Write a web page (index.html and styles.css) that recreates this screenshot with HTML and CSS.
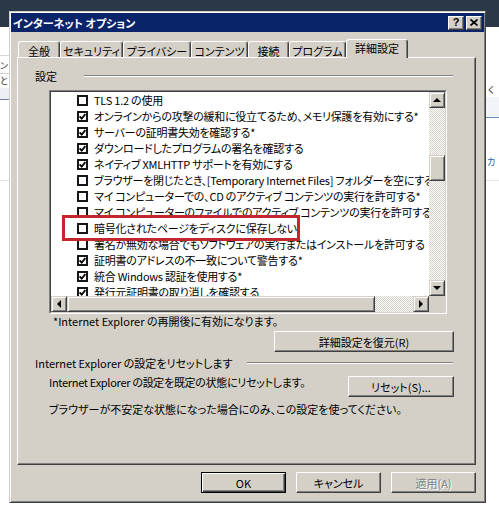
FILE: index.html
```html
<!DOCTYPE html>
<html lang="ja">
<head>
<meta charset="utf-8">
<title>インターネット オプション</title>
<link rel="stylesheet" href="styles.css">
</head>
<body>
<div class="desktop">
  <div class="taskband"></div>
  <div class="bg-rule l1"></div>
  <span class="bg-frag f-n">ン</span>
  <div class="bg-rule l2"></div>
  <span class="bg-frag f-to">と</span>
  <div class="bg-band lb"></div>
  <div class="bg-rule l3"></div>
  <div class="bg-rule l4"></div>
  <span class="bg-frag f-ku">く</span>
  <div class="bg-band rb"></div>
  <div class="bg-rule r1"></div>
  <span class="bg-frag f-ka">カ</span>
  <div class="bg-rule r2"></div>
</div>

<div class="dialog">
  <div class="titlebar">
    <span class="title">インターネット オプション</span>
    <div class="capbtns">
      <span class="capbtn help">?</span>
      <span class="capbtn close"><svg width="8" height="7" viewBox="0 0 8 7"><path d="M0.5 0.5 L7.5 6.5 M7.5 0.5 L0.5 6.5" stroke="#000" stroke-width="1.7" fill="none"/></svg></span>
    </div>
  </div>
  <div class="client">
    <div class="tabs">
      <div class="tab t1">全般</div>
      <div class="tab t2">セキュリティ</div>
      <div class="tab t3">プライバシー</div>
      <div class="tab t4">コンテンツ</div>
      <div class="tab t5">接続</div>
      <div class="tab t6">プログラム</div>
      <div class="tab active">詳細設定</div>
    </div>
    <div class="panel">
      <div class="group-head"><span>設定</span><i class="etch etch-settings"></i></div>
      <div class="listbox">
        <div class="listbox-inner">
          <div class="list-view">
            <div class="row"><span class="cb"></span><span>TLS 1.2 の使用</span></div>
            <div class="row"><span class="cb on"><svg width="7" height="7" viewBox="0 0 7 7"><path d="M0.6 3.4 L2.7 5.6 L6.4 1.1" stroke="#000" stroke-width="1.7" fill="none"/></svg></span><span>オンラインからの攻撃の緩和に役立てるため、メモリ保護を有効にする*</span></div>
            <div class="row"><span class="cb on"><svg width="7" height="7" viewBox="0 0 7 7"><path d="M0.6 3.4 L2.7 5.6 L6.4 1.1" stroke="#000" stroke-width="1.7" fill="none"/></svg></span><span>サーバーの証明書失効を確認する*</span></div>
            <div class="row"><span class="cb on"><svg width="7" height="7" viewBox="0 0 7 7"><path d="M0.6 3.4 L2.7 5.6 L6.4 1.1" stroke="#000" stroke-width="1.7" fill="none"/></svg></span><span>ダウンロードしたプログラムの署名を確認する</span></div>
            <div class="row"><span class="cb on"><svg width="7" height="7" viewBox="0 0 7 7"><path d="M0.6 3.4 L2.7 5.6 L6.4 1.1" stroke="#000" stroke-width="1.7" fill="none"/></svg></span><span>ネイティブ XMLHTTP サポートを有効にする</span></div>
            <div class="row"><span class="cb"></span><span>ブラウザーを閉じたとき、[Temporary Internet Files] フォルダーを空にする</span></div>
            <div class="row"><span class="cb"></span><span>マイ コンピューターでの、CD のアクティブ コンテンツの実行を許可する*</span></div>
            <div class="row"><span class="cb"></span><span>マイ コンピューターのファイルでのアクティブ コンテンツの実行を許可する*</span></div>
            <div class="row"><span class="cb"></span><span>暗号化されたページをディスクに保存しない</span></div>
            <div class="row"><span class="cb"></span><span>署名が無効な場合でもソフトウェアの実行またはインストールを許可する</span></div>
            <div class="row"><span class="cb on"><svg width="7" height="7" viewBox="0 0 7 7"><path d="M0.6 3.4 L2.7 5.6 L6.4 1.1" stroke="#000" stroke-width="1.7" fill="none"/></svg></span><span>証明書のアドレスの不一致について警告する*</span></div>
            <div class="row"><span class="cb on"><svg width="7" height="7" viewBox="0 0 7 7"><path d="M0.6 3.4 L2.7 5.6 L6.4 1.1" stroke="#000" stroke-width="1.7" fill="none"/></svg></span><span>統合 Windows 認証を使用する*</span></div>
            <div class="row"><span class="cb on"><svg width="7" height="7" viewBox="0 0 7 7"><path d="M0.6 3.4 L2.7 5.6 L6.4 1.1" stroke="#000" stroke-width="1.7" fill="none"/></svg></span><span>発行元証明書の取り消しを確認する</span></div>
          </div>
          <div class="vscroll">
            <span class="sbtn"><i class="arr up"></i></span>
            <div class="track vtrack"><span class="thumb vthumb"></span></div>
            <span class="sbtn"><i class="arr down"></i></span>
          </div>
          <div class="hscroll">
            <span class="sbtn"><i class="arr left"></i></span>
            <span class="thumb hthumb"></span>
            <div class="track htrack"></div>
            <span class="sbtn"><i class="arr right"></i></span>
          </div>
          <div class="corner"></div>
        </div>
      </div>
      <p class="note">*Internet Explorer の再開後に有効になります。</p>
      <div class="restore-row"><button class="btn restore">詳細設定を復元(R)</button></div>
      <div class="group-head reset-head"><span>Internet Explorer の設定をリセットします</span><i class="etch etch-reset"></i></div>
      <div class="reset-row"><span class="reset-text">Internet Explorer の設定を既定の状態にリセットします。</span><button class="btn reset">リセット(S)...</button></div>
      <p class="warn">ブラウザーが不安定な状態になった場合にのみ、この設定を使ってください。</p>
    </div>
    <div class="footer">
      <button class="btn default">OK</button>
      <button class="btn">キャンセル</button>
      <button class="btn disabled">適用(A)</button>
    </div>
  </div>
</div>

<div class="highlight"></div>
</body>
</html>
```
FILE: styles.css
```css
* { box-sizing: border-box; }
html, body { margin: 0; padding: 0; }
body {
  width: 499px;
  height: 507px;
  overflow: hidden;
  position: relative;
  background: #fff;
  font-family: "Noto Sans CJK JP", "Noto Sans", sans-serif;
  font-size: 11px;
  line-height: 14px;
  color: #000;
  font-feature-settings: "palt";
}

/* background desktop */
.desktop { position: absolute; inset: 0; }
.taskband { height: 27px; background: #2b3846; }
.bg-rule { position: absolute; height: 1px; }
.bg-band { position: absolute; }
.bg-frag { position: absolute; font-size: 9px; line-height: 10px; color: #333; }
.l1 { left: 0; width: 10px; top: 55px; background: #d6d6d6; }
.l2 { left: 0; width: 10px; top: 73px; background: #d0d0d0; }
.lb { left: 0; width: 10px; top: 88px; height: 11px; background: #eeeef6; }
.l3 { left: 0; width: 10px; top: 99px; background: #6e7fa8; }
.l4 { left: 0; width: 10px; top: 180px; background: #e2e2e2; }
.f-n { left: 0; top: 61px; }
.f-to { left: 0; top: 76px; }
.f-ku { left: 488px; top: 85px; }
.rb { left: 486px; width: 13px; top: 97px; height: 20px; background: #f1f4f8; }
.r1 { left: 486px; width: 13px; top: 117px; background: #6d8fb8; }
.f-ka { left: 487px; top: 157px; color: #2a64b0; }
.r2 { left: 486px; width: 13px; top: 180px; background: #e4e4e4; }

/* dialog window */
.dialog {
  position: absolute;
  left: 9px;
  top: 11px;
  width: 477px;
  height: 492px;
  background: #d4d0c8;
  border: 1px solid;
  border-color: #d4d0c8 #404040 #404040 #d4d0c8;
  box-shadow: inset 1px 1px #fff, inset -1px -1px #808080;
  padding: 1px;
  display: flex;
  flex-direction: column;
}
.titlebar {
  height: 19px;
  background: #0a246a;
  display: flex;
  align-items: center;
  padding: 0 2px 0 2px;
}
.title {
  flex: 1;
  color: #fff;
  font-weight: bold;
  font-size: 11px;
  line-height: 14px;
  white-space: nowrap;
}
.capbtns { display: flex; gap: 2px; }
.capbtn {
  width: 16px;
  height: 14px;
  background: #d4d0c8;
  border: 1px solid;
  border-color: #fff #404040 #404040 #fff;
  box-shadow: inset -1px -1px #808080;
  display: flex;
  align-items: center;
  justify-content: center;
}
.help {
  font-family: "Liberation Sans", Arial, sans-serif;
  font-weight: bold;
  font-size: 11px;
  line-height: 11px;
}

.client {
  flex: 1;
  padding: 7px 8px 0 6px;
  display: flex;
  flex-direction: column;
}

/* tabs */
.tabs {
  display: flex;
  align-items: flex-end;
  height: 18px;
  padding-left: 1px;
}
.tab {
  height: 16px;
  border: 1px solid;
  border-bottom: none;
  border-color: #fff #404040 transparent #fff;
  box-shadow: inset -1px 0 #808080;
  border-radius: 3px 3px 0 0;
  text-align: center;
  line-height: 14px;
  padding-top: 2px;
  white-space: nowrap;
  background: #d4d0c8;
}
.t1 { width: 42px; }
.t2 { width: 63px; }
.t3 { width: 68px; }
.t4 { width: 57px; }
.t5 { width: 41px; }
.t6 { width: 57px; }
.tab.active {
  width: 62px;
  height: 19px;
  margin-bottom: -1px;
  padding-top: 1px;
  position: relative;
  z-index: 1;
}

/* panel */
.panel {
  height: 408px;
  border: 1px solid;
  border-color: #fff #404040 #404040 #fff;
  box-shadow: inset -1px -1px #808080;
  padding-top: 12px;
}
.group-head {
  display: flex;
  align-items: center;
  height: 12px;
  line-height: 12px;
  padding: 0 22px 0 17px;
  white-space: nowrap;
}
.etch {
  flex: 1;
  height: 2px;
  border-top: 1px solid #808080;
  border-bottom: 1px solid #fff;
}
.etch-settings { margin-left: 27px; }
.etch-reset { margin-left: 14px; }

.listbox {
  margin: 8px 0 0 31px;
  width: 398px;
  height: 224px;
  border: 1px solid;
  border-color: #808080 #fff #fff #808080;
}
.listbox-inner {
  width: 100%;
  height: 100%;
  border: 1px solid;
  border-color: #404040 #d4d0c8 #d4d0c8 #404040;
  display: grid;
  grid-template-columns: 1fr 16px;
  grid-template-rows: 1fr 16px;
}
.list-view {
  background: #fff;
  overflow: hidden;
}
.row {
  height: 16px;
  display: flex;
  align-items: center;
  gap: 6px;
  padding-left: 26px;
  white-space: nowrap;
  line-height: 16px;
  letter-spacing: -0.25px;
}
.cb {
  flex: none;
  width: 11px;
  height: 11px;
  border: 2px solid #161616;
  background: #fff;
  display: flex;
  align-items: center;
  justify-content: center;
}
.cb svg { display: block; }

.vscroll { display: flex; flex-direction: column; }
.hscroll { display: flex; }
.sbtn {
  flex: none;
  width: 16px;
  height: 16px;
  background: #d4d0c8;
  border: 1px solid;
  border-color: #d4d0c8 #404040 #404040 #d4d0c8;
  box-shadow: inset 1px 1px #fff, inset -1px -1px #808080;
  display: flex;
  align-items: center;
  justify-content: center;
}
.track {
  flex: 1;
  background-color: #fff;
  background-image: repeating-conic-gradient(#d4d0c8 0 25%, #fff 0 50%);
  background-size: 2px 2px;
}
.vtrack { padding-top: 47px; }
.thumb {
  display: block;
  background: #d4d0c8;
  border: 1px solid;
  border-color: #d4d0c8 #404040 #404040 #d4d0c8;
  box-shadow: inset 1px 1px #fff, inset -1px -1px #808080;
}
.vthumb { width: 16px; height: 26px; }
.hthumb { flex: none; width: 308px; height: 16px; }
.corner { background: #d4d0c8; }
.arr { display: block; width: 0; height: 0; }
.arr.up { border-left: 4px solid transparent; border-right: 4px solid transparent; border-bottom: 4px solid #000; }
.arr.down { border-left: 4px solid transparent; border-right: 4px solid transparent; border-top: 4px solid #000; }
.arr.left { border-top: 4px solid transparent; border-bottom: 4px solid transparent; border-right: 4px solid #000; }
.arr.right { border-top: 4px solid transparent; border-bottom: 4px solid transparent; border-left: 4px solid #000; }

.note {
  margin: 0 0 0 35px;
  height: 14px;
  line-height: 14px;
  white-space: nowrap;
}
.restore-row {
  display: flex;
  justify-content: flex-end;
  padding-right: 21px;
  margin-top: 3px;
}
.reset-head { margin-top: 5px; }
.reset-row {
  display: flex;
  justify-content: space-between;
  align-items: flex-start;
  padding: 0 21px 0 31px;
  margin-top: 7px;
}
.reset-text { line-height: 12px; white-space: nowrap; letter-spacing: -0.3px; }
.warn {
  margin: 6px 0 0 31px;
  line-height: 12px;
  white-space: nowrap;
}

/* buttons */
.btn {
  font: inherit;
  font-feature-settings: "palt";
  color: #000;
  background: #d4d0c8;
  border: 1px solid;
  border-color: #fff #404040 #404040 #fff;
  box-shadow: inset -1px -1px #808080;
  height: 21px;
  padding: 0;
  line-height: 14px;
  white-space: nowrap;
}
.restore { width: 180px; }
.reset { width: 106px; }
.footer {
  display: flex;
  justify-content: flex-end;
  gap: 10px;
  margin-top: 7px;
}
.footer .btn { width: 85px; }
.btn.default {
  border: 1px solid #000;
  box-shadow: inset 1px 1px #fff, inset -1px -1px #404040, inset -2px -2px #808080;
}
.btn.disabled {
  color: #808080;
  text-shadow: 1px 1px #fff;
}

/* red annotation frame */
.highlight {
  position: absolute;
  left: 62px;
  top: 215px;
  width: 238px;
  height: 26px;
  border: 3px solid #c4262d;
}
```
